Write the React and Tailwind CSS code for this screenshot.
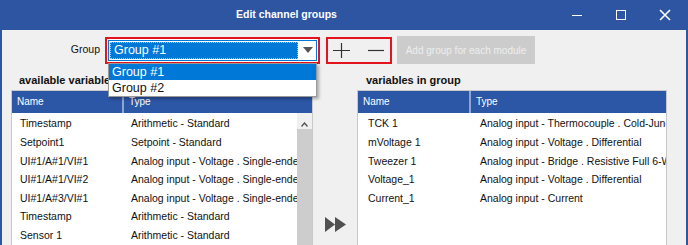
const leftRows = [
  ['Timestamp', 'Arithmetic - Standard'],
  ['Setpoint1', 'Setpoint - Standard'],
  ['UI#1/A#1/VI#1', 'Analog input - Voltage . Single-ended'],
  ['UI#1/A#1/VI#2', 'Analog input - Voltage . Single-ended'],
  ['UI#1/A#3/VI#1', 'Analog input - Voltage . Single-ended'],
  ['Timestamp', 'Arithmetic - Standard'],
  ['Sensor 1', 'Arithmetic - Standard'],
]

const rightRows = [
  ['TCK 1', 'Analog input - Thermocouple . Cold-Junction'],
  ['mVoltage 1', 'Analog input - Voltage . Differential'],
  ['Tweezer 1', 'Analog input - Bridge . Resistive Full 6-Wire'],
  ['Voltage_1', 'Analog input - Voltage . Differential'],
  ['Current_1', 'Analog input - Current'],
]

function TableHeader({ nameW }) {
  return (
    <div className="flex h-[22px] bg-[#2c56a6] text-white text-[10px] leading-[22px]">
      <div className={`${nameW} shrink-0 pl-[5px] border-r-2 border-[#8fa6d3]`}>Name</div>
      <div className="flex-1 pl-[5px]">Type</div>
    </div>
  )
}

function Rows({ rows, nameW, namePad, typePad }) {
  return (
    <div className="pt-[2px]">
      {rows.map(([n, t], i) => (
        <div key={i} className="flex h-[18.6px] items-center text-[10.5px] text-[#111] whitespace-nowrap">
          <div className={`${nameW} shrink-0 ${namePad}`}>{n}</div>
          <div className={`flex-1 overflow-hidden ${typePad}`}>{t}</div>
        </div>
      ))}
    </div>
  )
}

export default function App() {
  return (
    <div className="w-[688px] h-[245px] overflow-hidden bg-[#2d55a2] flex flex-col font-['Liberation_Sans',Arial,sans-serif]">
      {/* ── Title bar ───────────────────────────────────────────── */}
      <div className="h-[30px] shrink-0 flex items-center text-white">
        <div className="ml-[236px] text-[10.5px] font-bold">Edit channel groups</div>
        <div className="ml-auto flex items-center">
          <div className="w-[10px] h-px bg-white mr-[34px]" />
          <div className="w-[10px] h-[10px] border border-white mr-[33px]" />
          <svg className="w-[12px] h-[12px] mr-[17px]" viewBox="0 0 12 12" stroke="white" strokeWidth="1.6">
            <path d="M1 1 L11 11 M11 1 L1 11" />
          </svg>
        </div>
      </div>

      {/* ── Body ────────────────────────────────────────────────── */}
      <div className="relative flex-1 mx-[2px] bg-[#f0f0f0] flex flex-col">
        {/* Group row */}
        <div className="mt-[6px] h-[28px] flex items-center">
          <div className="w-[98px] text-right text-[10.5px] text-[#111]">Group</div>
          <div className="ml-[5px] w-[215px] h-[27px] border-2 border-[#e3141c] p-[1px] bg-white">
            <div className="h-full flex border border-[#0078d7] bg-white">
              <div className="flex-1 m-[1px] bg-[#0078d7] border border-dotted border-[#9cc8ee] text-white text-[12.5px] leading-[15px] pl-[3px]">
                Group #1
              </div>
              <div className="w-[17px] flex items-center justify-center">
                <svg className="w-[10px] h-[6px]" viewBox="0 0 10 6">
                  <path d="M0 0 H10 L5 6 Z" fill="#555" />
                </svg>
              </div>
            </div>
          </div>
          <div className="ml-[6px] w-[66px] h-[27px] border-2 border-[#e3141c] flex items-center">
            <svg className="ml-[5px] w-[17px] h-[15px]" viewBox="0 0 17 15" stroke="#333" strokeWidth="1.2">
              <path d="M0 7.5 H17 M8.5 0 V15" />
            </svg>
            <svg className="ml-[18px] w-[16px] h-[15px]" viewBox="0 0 16 15" stroke="#333" strokeWidth="1.2">
              <path d="M0 7.5 H16" />
            </svg>
          </div>
          <div className="ml-[5px] w-[138px] h-[28px] bg-[#cccccc] text-[#eeeeee] text-[10px] flex items-center justify-center">
            Add group for each module
          </div>
        </div>

        {/* Section labels */}
        <div className="mt-[8px] h-[16px] flex items-center text-[11px] font-bold text-[#111]">
          <div className="ml-[17px] w-[347px]">available variables</div>
          <div>variables in group</div>
        </div>

        {/* Tables */}
        <div className="mt-[2px] flex-1 flex pl-[9px]">
          <div className="w-[302px] border border-[#c8c8c8] border-b-0 bg-white flex flex-col">
            <TableHeader nameW="w-[112px]" />
            <div className="flex-1 flex">
              <div className="flex-1 min-w-0">
                <Rows rows={leftRows} nameW="w-[112px]" namePad="pl-[8px]" typePad="pl-[7px]" />
              </div>
              <div className="w-[15px] bg-[#f0f0f0] flex flex-col">
                <div className="h-[14px] flex items-end justify-center">
                  <svg className="w-[7px] h-[5px]" viewBox="0 0 7 5" stroke="#555" strokeWidth="1.4" fill="none">
                    <path d="M0.5 4.5 L3.5 1 L6.5 4.5" />
                  </svg>
                </div>
                <div className="mt-[2px] flex-1 bg-[#cdcdcd]" />
              </div>
            </div>
          </div>

          <div className="w-[44px] flex flex-col items-center">
            <svg className="mt-[127px] w-[21px] h-[15px]" viewBox="0 0 21 15" fill="#505050">
              <path d="M0 0 L10 7.5 L0 15 Z M10 0 L21 7.5 L10 15 Z" />
            </svg>
          </div>

          <div className="w-[310px] border border-[#c8c8c8] border-b-0 bg-white flex flex-col">
            <TableHeader nameW="w-[113px]" />
            <Rows rows={rightRows} nameW="w-[113px]" namePad="pl-[10px]" typePad="pl-[9px]" />
          </div>
        </div>

        {/* Open combo dropdown */}
        <div className="absolute left-[106px] top-[33px] w-[209px] bg-white border border-[#999] shadow-[2px_2px_3px_rgba(0,0,0,0.3)] text-[12.5px] leading-[16px]">
          <div className="bg-[#0078d7] text-white pl-[3px]">Group #1</div>
          <div className="text-[#111] pl-[3px]">Group #2</div>
        </div>
      </div>
    </div>
  )
}
